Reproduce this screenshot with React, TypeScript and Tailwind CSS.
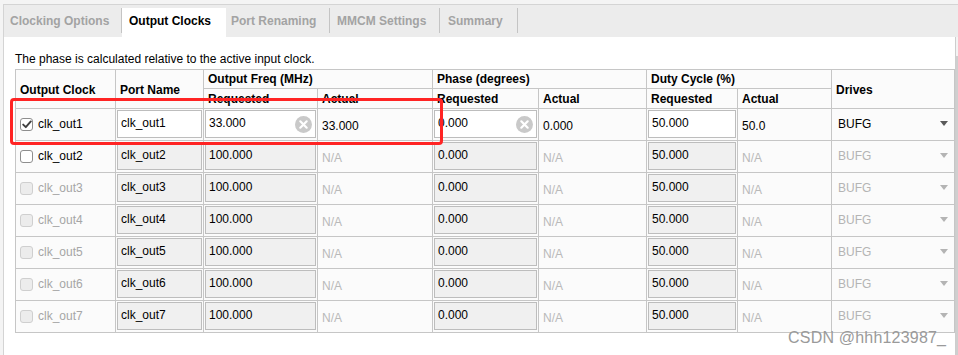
import React from "react";

const font = { fontFamily: '"Liberation Sans", Arial, sans-serif' };

function ClearIcon() {
  return (
    <svg width="17" height="17" viewBox="0 0 17 17" className="shrink-0">
      <circle cx="8.5" cy="8.5" r="8.5" fill="#c9c9c9" />
      <path d="M5.3 5.3 L11.7 11.7 M11.7 5.3 L5.3 11.7" stroke="#ffffff" strokeWidth="2.2" strokeLinecap="round" />
    </svg>
  );
}

function Arrow({ enabled }: { enabled: boolean }) {
  return (
    <svg width="8" height="5" viewBox="0 0 8 5">
      <path d="M0 0 L8 0 L4 5 Z" fill={enabled ? "#5a5a5a" : "#b4b4b4"} />
    </svg>
  );
}

function Field({ value, enabled, clear }: { value: string; enabled: boolean; clear?: boolean }) {
  return (
    <div
      className={
        "h-[28px] border flex items-center justify-between pl-[3px] pr-[3px] " +
        (enabled ? "bg-white border-[#bdbdbd]" : "bg-[#f0f0f0] border-[#bdbdbd]")
      }
    >
      <span className="text-black mb-[3px]">{value}</span>
      {clear ? <ClearIcon /> : null}
    </div>
  );
}

function Checkbox({ checked, enabled }: { checked: boolean; enabled: boolean }) {
  return (
    <div
      className={
        "w-[13px] h-[13px] rounded-[3px] border flex items-center justify-center " +
        (enabled ? "bg-white border-[#8e8e8e]" : "bg-[#ececec] border-[#cfcfcf]")
      }
    >
      {checked ? (
        <svg width="10" height="9" viewBox="0 0 10 9">
          <path d="M1.2 4.6 L3.8 7.2 L8.8 1.4" stroke="#404040" strokeWidth="1.9" fill="none" strokeLinecap="round" strokeLinejoin="round" />
        </svg>
      ) : null}
    </div>
  );
}

type Row = { n: number; freq: string; freqAct: string; phase: string; phaseAct: string; duty: string; dutyAct: string };

const rows: Row[] = [
  { n: 1, freq: "33.000", freqAct: "33.000", phase: "0.000", phaseAct: "0.000", duty: "50.000", dutyAct: "50.0" },
  ...[2, 3, 4, 5, 6, 7].map((n) => ({ n, freq: "100.000", freqAct: "N/A", phase: "0.000", phaseAct: "N/A", duty: "50.000", dutyAct: "N/A" })),
];

const td = "border border-[#c6c6c6] p-0 align-top";
const th = "border border-[#c6c6c6] p-0 font-bold text-left align-middle";

export default function App() {
  return (
    <div className="relative w-[958px] h-[355px] overflow-hidden bg-[#f4f4f4] text-[12px] text-black" style={font}>
      <div className="absolute left-[3px] top-[4px] right-0 bottom-0 flex flex-col border-l border-t border-[#d4d4d4]">
        {/* tab bar */}
        <div className="h-[32px] bg-[#ececec] flex items-end font-bold">
          <div className="w-[118px] h-[29px] flex items-start">
            <div className="w-full h-[25px] border-r border-[#c4c4c4] pl-[6px] pt-[4px] text-[#a3a3a3]">Clocking Options</div>
          </div>
          <div className="w-[104px] h-[29px] bg-white pl-[7px] pt-[4px] text-black">Output Clocks</div>
          <div className="w-[104px] h-[29px] flex items-start">
            <div className="w-full h-[25px] border-r border-[#c4c4c4] pl-[5px] pt-[4px] text-[#a3a3a3]">Port Renaming</div>
          </div>
          <div className="w-[110px] h-[29px] flex items-start">
            <div className="w-full h-[25px] border-r border-[#c4c4c4] pl-[7px] pt-[4px] text-[#a3a3a3]">MMCM Settings</div>
          </div>
          <div className="w-[78px] h-[29px] flex items-start">
            <div className="w-full h-[25px] border-r border-[#c4c4c4] pl-[8px] pt-[4px] text-[#a3a3a3]">Summary</div>
          </div>
        </div>
        {/* content */}
        <div className="flex-1 flex">
          <div className="flex-1 bg-white pl-[11px] pt-[15px]">
            <div className="h-[17px] leading-[14px]">The phase is calculated relative to the active input clock.</div>
            <table className="table-fixed border-collapse w-[939px]">
              <colgroup>
                <col className="w-[100px]" />
                <col className="w-[88px]" />
                <col className="w-[114px]" />
                <col className="w-[115px]" />
                <col className="w-[106px]" />
                <col className="w-[108px]" />
                <col className="w-[91px]" />
                <col className="w-[94px]" />
                <col className="w-[123px]" />
              </colgroup>
              <thead className="bg-[#fbfbfb]">
                <tr className="h-[19px]">
                  <th rowSpan={2} className={th + " pl-[4px] pt-[2px]"}>Output Clock</th>
                  <th rowSpan={2} className={th + " pl-[4px] pt-[2px]"}>Port Name</th>
                  <th colSpan={2} className={th + " pl-[4px]"}>Output Freq (MHz)</th>
                  <th colSpan={2} className={th + " pl-[4px]"}>Phase (degrees)</th>
                  <th colSpan={2} className={th + " pl-[4px]"}>Duty Cycle (%)</th>
                  <th rowSpan={2} className={th + " pl-[4px] pt-[2px]"}>Drives</th>
                </tr>
                <tr className="h-[20px]">
                  <th className={th + " pl-[4px] pt-[1px]"}>Requested</th>
                  <th className={th + " pl-[4px] pt-[1px]"}>Actual</th>
                  <th className={th + " pl-[4px] pt-[1px]"}>Requested</th>
                  <th className={th + " pl-[4px] pt-[1px]"}>Actual</th>
                  <th className={th + " pl-[4px] pt-[1px]"}>Requested</th>
                  <th className={th + " pl-[4px] pt-[1px]"}>Actual</th>
                </tr>
              </thead>
              <tbody className="bg-[#fbfbfb]">
                {rows.map((r) => {
                  const en = r.n === 1;
                  const na = en ? "text-black" : "text-[#b9b9b9]";
                  return (
                    <tr key={r.n} className="h-[32px]">
                      <td className={td}>
                        <div className="h-[31px] flex items-center pl-[4px] pb-[1px] gap-[5px]">
                          <Checkbox checked={en} enabled={r.n <= 2} />
                          <span className={r.n <= 2 ? "text-black" : "text-[#a6a6a6]"}>clk_out{r.n}</span>
                        </div>
                      </td>
                      <td className={td + " p-[1px]"}>
                        <Field value={"clk_out" + r.n} enabled={en} />
                      </td>
                      <td className={td + " p-[1px]"}>
                        <Field value={r.freq} enabled={en} clear={en} />
                      </td>
                      <td className={td}>
                        <div className={"h-[31px] flex items-center pl-[4px] pt-[3px] " + na}>{r.freqAct}</div>
                      </td>
                      <td className={td + " p-[1px]"}>
                        <Field value={r.phase} enabled={en} clear={en} />
                      </td>
                      <td className={td}>
                        <div className={"h-[31px] flex items-center pl-[4px] pt-[3px] " + na}>{r.phaseAct}</div>
                      </td>
                      <td className={td + " p-[1px]"}>
                        <Field value={r.duty} enabled={en} />
                      </td>
                      <td className={td}>
                        <div className={"h-[31px] flex items-center pl-[4px] pt-[3px] " + na}>{r.dutyAct}</div>
                      </td>
                      <td className={td}>
                        <div className="h-[31px] flex items-center justify-between pl-[6px] pr-[6px] pb-[2px]">
                          <span className={en ? "text-black" : "text-[#b4b4b4]"}>BUFG</span>
                          <Arrow enabled={en} />
                        </div>
                      </td>
                    </tr>
                  );
                })}
              </tbody>
            </table>
          </div>
          {/* scrollbar strip */}
          <div className="w-[5px] border-l border-[#cdcdcd] bg-[#f3f3f3] flex flex-col items-end pt-[19px]">
            <div className="w-[3px] flex-1 bg-[#cfcfcf]" />
          </div>
        </div>
      </div>
      {/* highlight annotation */}
      <div className="absolute left-[10px] top-[98px] w-[433px] h-[47px] border-[3px] border-[#ff2424] rounded-[4px] pointer-events-none" />
      {/* watermark */}
      <div className="absolute left-[788px] top-[328px] text-[16px] text-[#9a9a9a] leading-[20px] tracking-[0.2px]">CSDN @hhh123987_</div>
    </div>
  );
}
